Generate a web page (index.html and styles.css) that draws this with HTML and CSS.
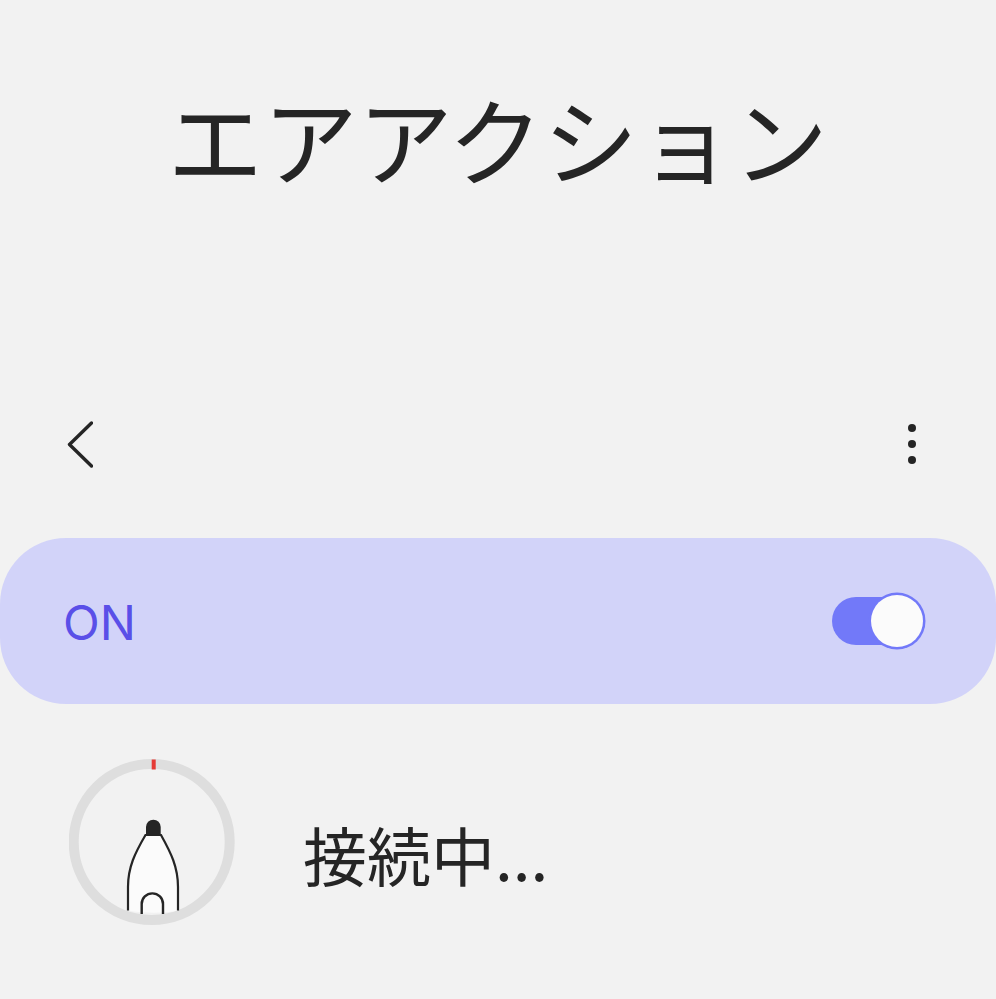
FILE: index.html
```html
<!DOCTYPE html>
<html lang="ja">
<head>
<meta charset="utf-8">
<title>エアアクション</title>
<link rel="stylesheet" href="styles.css">
</head>
<body>
<header class="title-area"><h1 class="title">エアアクション</h1></header>
<nav class="appbar">
  <svg class="back" width="26" height="50" viewBox="0 0 26 50"><path d="M24.500 2 L2.500 23.500 L24.500 45" fill="none" stroke="#252525" stroke-width="3.400" stroke-linecap="round" stroke-linejoin="round"/></svg>
  <div class="more"><span class="dot"></span><span class="dot"></span><span class="dot"></span></div>
</nav>
<section class="master">
  <span class="on">ON</span>
  <div class="switch"><span class="knob"></span></div>
</section>
<section class="status">
  <svg class="pen" width="166" height="166" viewBox="0 0 166 166">
    <circle cx="82.700" cy="83" r="78" fill="none" stroke="#dedede" stroke-width="10"/>
    <rect x="82.700" y="0.500" width="4" height="10" fill="#e53a35"/>
    <path d="M59 151.500 V128 C59 108 66 94 76.500 76 H92 C102 94 109 108 109 128 V151.500 C95 154.500 75 154.500 59 151.500Z" fill="#fbfbfb"/>
    <path d="M59 151.500 V128 C59 108 66 94 76.500 76 H92 C102 94 109 108 109 128 V151.500" fill="none" stroke="#252525" stroke-width="2.200"/>
    <path d="M77 76 V68 A7.350 7.350 0 0 1 91.700 68 V76Z" fill="#252525"/>
    <path d="M72.700 155 V145 A10.650 10.650 0 0 1 94 145 V155" fill="none" stroke="#252525" stroke-width="2.400"/>
  </svg>
  <span class="status-text">接続中...</span>
</section>
</body>
</html>
```
FILE: styles.css
```css
html, body {
  margin: 0;
  padding: 0;
  background: #f2f2f2;
  height: 999px;
  overflow: hidden;
}
body {
  font-family: "Noto Sans CJK JP", "Noto Sans", sans-serif;
  color: #252525;
}
.title-area {
  height: 420px;
  display: flex;
  justify-content: center;
  padding-top: 83px;
  box-sizing: border-box;
}
.title {
  margin: 0;
  font-size: 95px;
  font-weight: 400;
  line-height: 110px;
  white-space: nowrap;
}
.appbar {
  height: 118px;
  display: flex;
  justify-content: space-between;
  align-items: flex-start;
  padding: 1px 80px 0 67px;
  box-sizing: border-box;
}
.back { display: block; }
.more {
  display: flex;
  flex-direction: column;
  gap: 8px;
  padding-top: 3px;
}
.dot {
  width: 8px;
  height: 8px;
  border-radius: 50%;
  background: #252525;
}
.master {
  height: 166px;
  background: #d2d3f9;
  border-radius: 66px;
  display: flex;
  justify-content: space-between;
  align-items: center;
  padding: 0 71px 0 63px;
}
.on {
  font-family: Inter, "Liberation Sans", sans-serif;
  font-size: 48px;
  line-height: 56px;
  position: relative;
  top: 2px;
  color: #5a4fe8;
}
.switch {
  width: 93px;
  height: 48px;
  border-radius: 24px;
  background: #7279f9;
  position: relative;
}
.knob {
  position: absolute;
  right: 2px;
  top: -2px;
  width: 52px;
  height: 52px;
  border-radius: 50%;
  background: #fbfbfb;
  box-shadow: 0 0 0 2.500px #7279f9;
}
.status {
  display: flex;
  align-items: flex-start;
  padding: 55px 0 0 69px;
}
.pen { display: block; flex: none; }
.status-text {
  margin: 54px 0 0 68px;
  font-size: 64px;
  line-height: 80px;
}
```
